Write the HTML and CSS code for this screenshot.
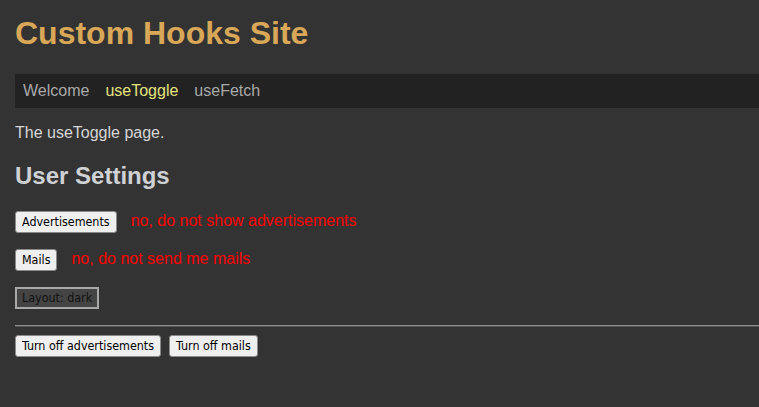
FILE: index.html
```html
<!DOCTYPE html>
<html>
<head>
<meta charset="utf-8">
<link rel="stylesheet" href="styles.css">
</head>
<body>
<div class="app">
  <h1 class="title">Custom Hooks Site</h1>
  <nav class="nav">
    <a class="nav-link">Welcome</a>
    <a class="nav-link active">useToggle</a>
    <a class="nav-link">useFetch</a>
  </nav>
  <p class="intro">The useToggle page.</p>
  <h2 class="subtitle">User Settings</h2>
  <div class="setting"><button class="btn">Advertisements</button><span class="status">no, do not show advertisements</span></div>
  <div class="setting"><button class="btn">Mails</button><span class="status">no, do not send me mails</span></div>
  <div class="setting"><button class="btn btn-dark">Layout: dark</button></div>
  <hr class="rule">
  <div class="actions">
    <button class="btn">Turn off advertisements</button>
    <button class="btn">Turn off mails</button>
  </div>
</div>
</body>
</html>
```
FILE: styles.css
```css
html, body {
  margin: 0;
  padding: 0;
  background: #333333;
}
body {
  font-family: "Liberation Sans", Arial, sans-serif;
  font-size: 16px;
  color: #d6d6d6;
  overflow: hidden;
}
.app {
  padding: 15px 0 15px 15px;
}
.title {
  margin: 0 0 22.4px;
  font-size: 32px;
  font-weight: bold;
  color: #d8a858;
}
.nav {
  display: flex;
  background: #222222;
  padding: 8px 0;
  line-height: 18px;
}
.nav-link {
  padding: 0 8px;
  color: #a9a9a9;
}
.nav-link.active {
  color: #e4e27e;
}
.intro {
  margin: 16px 0;
}
.subtitle {
  margin: 19.92px 0 20.5px;
  font-size: 24px;
  color: #cfd1d4;
}
.setting {
  display: flex;
  align-items: baseline;
  margin: 16px 0 15.5px;
}
.btn {
  font-family: "DejaVu Sans Condensed", "DejaVu Sans", sans-serif;
  font-size: 12.4px;
  line-height: 16px;
  padding: 2px 6px;
  margin: 0;
  border: 1px solid #8a8a8a;
  border-radius: 3px;
  background: #efefef;
  color: #000;
}
.btn-dark {
  background: #444444;
  border: 2px solid #a8a8a8;
  border-radius: 0;
  padding: 1px 5px;
  color: #111;
}
.status {
  margin-left: 14px;
  color: #ff0000;
}
.rule {
  margin: 16px 0 8px;
  border: 0;
  border-top: 1px solid #8c8c8c;
  border-bottom: 1px solid #555;
}
.actions {
  display: flex;
  gap: 8px;
}
```
